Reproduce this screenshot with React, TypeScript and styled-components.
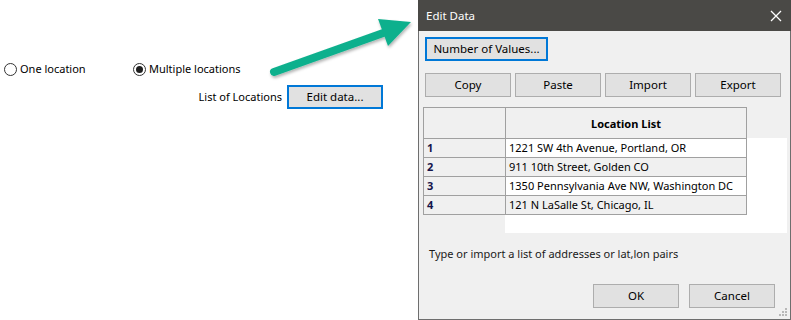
import React from "react";
import styled, { createGlobalStyle } from "styled-components";

const GlobalStyle = createGlobalStyle`
  html, body { margin: 0; padding: 0; background: #ffffff; }
  body { font-family: "Noto Sans", "Open Sans", Arial, sans-serif; font-size: 11px; color: #000; }
  * { box-sizing: border-box; }
`;

const Root = styled.div`
  position: relative;
  display: flex;
  width: 791px;
  height: 320px;
  overflow: hidden;
  background: #ffffff;
`;

const LeftPanel = styled.div`
  width: 418px;
  flex: none;
  display: flex;
  flex-direction: column;
  padding-top: 61px;
`;

const RadioGroup = styled.div`
  display: grid;
  grid-template-columns: 129px auto;
  padding-left: 4px;
  height: 16px;
  align-items: center;
`;

const RadioOption = styled.label`
  display: flex;
  align-items: center;
  gap: 3px;
  line-height: 16px;
  white-space: nowrap;
`;

const RadioCircle = styled.span<{ $checked?: boolean }>`
  width: 13px;
  height: 13px;
  border-radius: 50%;
  border: 1px solid #333333;
  background: #ffffff;
  display: flex;
  align-items: center;
  justify-content: center;
  &::after {
    content: "";
    width: 7px;
    height: 7px;
    border-radius: 50%;
    background: ${(p) => (p.$checked ? "#1f1f1f" : "transparent")};
  }
`;

const FieldRow = styled.div`
  display: flex;
  justify-content: flex-end;
  align-items: center;
  gap: 5px;
  padding-right: 35px;
  margin-top: 8px;
`;

const FieldLabel = styled.span`
  line-height: 16px;
  white-space: nowrap;
`;

const Button = styled.button<{ $focused?: boolean; $w?: number }>`
  font-family: inherit;
  font-size: 11.5px;
  color: #000;
  background: #e1e1e1;
  border: ${(p) => (p.$focused ? "2px solid #0078d7" : "1px solid #adadad")};
  height: 24px;
  width: ${(p) => (p.$w ? `${p.$w}px` : "auto")};
  padding: 0 6px;
  margin: 0;
  display: flex;
  align-items: center;
  justify-content: center;
  white-space: nowrap;
  line-height: 16px;
`;

const Dialog = styled.div`
  position: relative;
  flex: 1;
  display: flex;
  flex-direction: column;
  background: #f0f0f0;
  border: 1px solid #6e6e6e;
  border-top: none;
`;

const TitleBar = styled.div`
  height: 31px;
  flex: none;
  background: #4a4946;
  color: #ffffff;
  display: flex;
  align-items: center;
  justify-content: space-between;
  padding: 0 9px 0 8px;
  margin: 0 -1px;
  font-size: 11.5px;
`;

const TitleText = styled.span`
  line-height: 16px;
`;

const CloseIcon = styled.svg`
  display: block;
`;

const DialogBody = styled.div`
  flex: 1;
  display: flex;
  flex-direction: column;
  padding: 6px 0 0 4px;
`;

const TopButtonWrap = styled.div`
  padding-left: 2px;
  display: flex;
`;

const ButtonRow = styled.div`
  display: grid;
  grid-template-columns: repeat(4, 86px);
  gap: 4px;
  margin-top: 12px;
  padding-left: 2px;
`;

const GridArea = styled.div`
  margin-top: 10px;
  width: 364px;
  height: 126px;
  background: linear-gradient(#ffffff, #ffffff) no-repeat;
  background-position: 82px 31px;
  background-size: calc(100% - 82px) calc(100% - 31px);
`;

const Table = styled.table`
  border-collapse: collapse;
  table-layout: fixed;
  width: 323px;
`;

const HeadCell = styled.th<{ $w: number }>`
  width: ${(p) => p.$w}px;
  height: 31px;
  background: #f0f0f0;
  border: 1px solid #a0a0a0;
  font-weight: 700;
  text-align: center;
  padding: 0;
`;

const RowHead = styled.td`
  height: 19px;
  background: #f0f0f0;
  border: 1px solid #a0a0a0;
  font-weight: 700;
  color: #15154a;
  padding: 0 3px;
  line-height: 16px;
`;

const DataCell = styled.td<{ $alt?: boolean }>`
  height: 19px;
  background: ${(p) => (p.$alt ? "#f0f0f0" : "#ffffff")};
  border: 1px solid #a0a0a0;
  padding: 0 3px;
  line-height: 16px;
  white-space: nowrap;
`;

const Hint = styled.div`
  margin-top: 13px;
  padding-left: 6px;
  line-height: 16px;
  color: #1a1a1a;
`;

const Footer = styled.div`
  display: flex;
  justify-content: flex-end;
  gap: 10px;
  margin-top: 22px;
  padding-right: 15px;
`;

const Grip = styled.svg`
  position: absolute;
  right: 2px;
  bottom: 2px;
`;

const ArrowOverlay = styled.svg`
  position: absolute;
  left: 0;
  top: 0;
  pointer-events: none;
`;

const rows = [
  "1221 SW 4th Avenue, Portland, OR",
  "911 10th Street, Golden CO",
  "1350 Pennsylvania Ave NW, Washington DC",
  "121 N LaSalle St, Chicago, IL",
];

export default function App() {
  return (
    <>
      <GlobalStyle />
      <Root>
        <LeftPanel>
          <RadioGroup>
            <RadioOption>
              <RadioCircle />
              One location
            </RadioOption>
            <RadioOption>
              <RadioCircle $checked />
              Multiple locations
            </RadioOption>
          </RadioGroup>
          <FieldRow>
            <FieldLabel>List of Locations</FieldLabel>
            <Button $focused $w={96}>Edit data...</Button>
          </FieldRow>
        </LeftPanel>

        <Dialog>
          <TitleBar>
            <TitleText>Edit Data</TitleText>
            <CloseIcon width="12" height="12" viewBox="0 0 12 12">
              <path d="M1 1 L11 11 M11 1 L1 11" stroke="#ffffff" strokeWidth="1.3" fill="none" />
            </CloseIcon>
          </TitleBar>
          <DialogBody>
            <TopButtonWrap>
              <Button $focused $w={123}>Number of Values...</Button>
            </TopButtonWrap>
            <ButtonRow>
              <Button>Copy</Button>
              <Button>Paste</Button>
              <Button>Import</Button>
              <Button>Export</Button>
            </ButtonRow>
            <GridArea>
              <Table>
                <thead>
                  <tr>
                    <HeadCell $w={82} />
                    <HeadCell $w={241}>Location List</HeadCell>
                  </tr>
                </thead>
                <tbody>
                  {rows.map((r, i) => (
                    <tr key={r}>
                      <RowHead>{i + 1}</RowHead>
                      <DataCell $alt={i % 2 === 1}>{r}</DataCell>
                    </tr>
                  ))}
                </tbody>
              </Table>
            </GridArea>
            <Hint>Type or import a list of addresses or lat,lon pairs</Hint>
            <Footer>
              <Button $w={86}>OK</Button>
              <Button $w={86}>Cancel</Button>
            </Footer>
          </DialogBody>
          <Grip width="9" height="9" viewBox="0 0 9 9">
            {[
              [6, 0],
              [3, 3],
              [6, 3],
              [0, 6],
              [3, 6],
              [6, 6],
            ].map(([x, y]) => (
              <rect key={`${x}-${y}`} x={x} y={y} width="2" height="2" fill="#b8b8b8" />
            ))}
          </Grip>
        </Dialog>

        <ArrowOverlay width="791" height="320" viewBox="0 0 791 320">
          <defs>
            <filter id="shadow" x="-20%" y="-20%" width="140%" height="140%">
              <feDropShadow dx="1" dy="2" stdDeviation="1.5" floodColor="#000" floodOpacity="0.3" />
            </filter>
          </defs>
          <g filter="url(#shadow)" fill="#10b08d" stroke="#10b08d">
            <line x1="274" y1="72" x2="386" y2="32" strokeWidth="8" strokeLinecap="round" />
            <polygon points="411,22 378,19 388,46" stroke="none" />
          </g>
        </ArrowOverlay>
      </Root>
    </>
  );
}
